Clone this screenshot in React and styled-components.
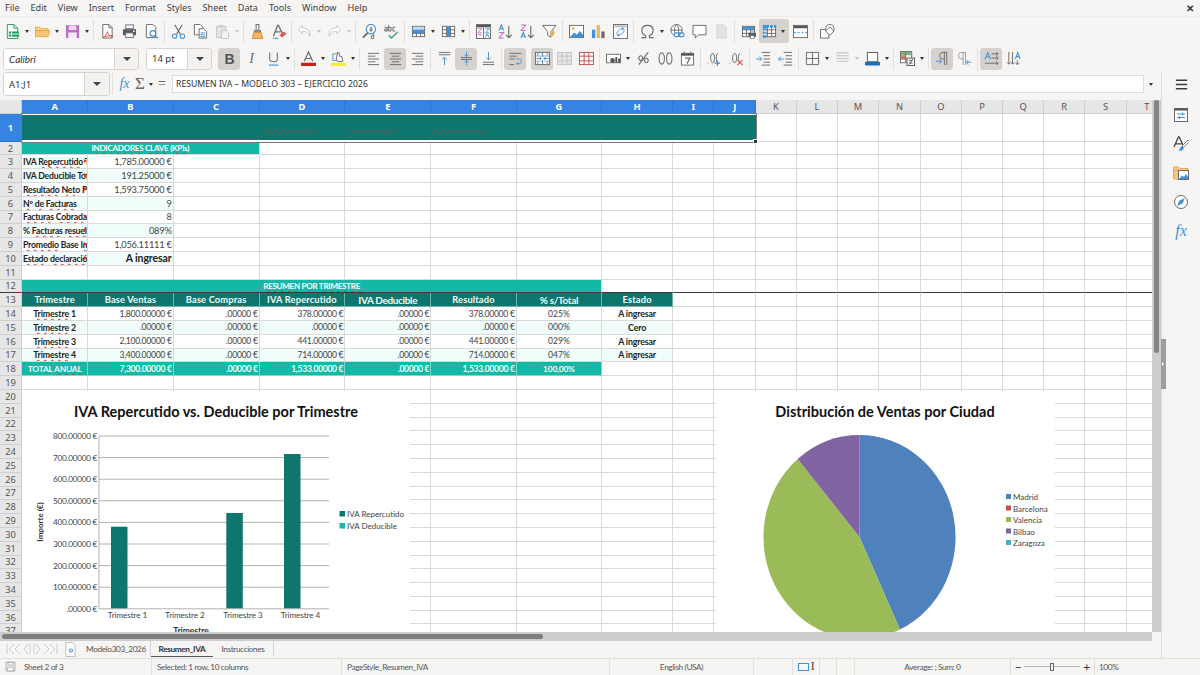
import React from 'react'
import styled, { createGlobalStyle } from 'styled-components'

const GlobalStyle = createGlobalStyle`
  html, body { margin: 0; padding: 0; background: #f6f5f4; }
  body { width: 1200px; height: 675px; overflow: hidden; font-family: "Noto Sans", sans-serif; }
`

const GR = '#6a6a6a'
const BL = '#3f92d8'
const LG = '#c4c4c4'

const Line = ({ d, c = GR, w = 1 }) => <path d={d} fill="none" stroke={c} strokeWidth={w} />

const Grid3 = ({ c = GR }) => (
  <>
    <rect x="1.5" y="2.5" width="13" height="11" fill="#fff" stroke={c} />
    <Line c={c} d="M1.5 6.2h13M1.5 10h13M5.8 2.5v11M10.2 2.5v11" />
  </>
)

const icons = {
  newDoc: (
    <>
      <path d="M2.5.5h7l4 4v11h-11z" fill="#fff" stroke="#1f9d61" />
      <path d="M9.5.5v4h4" fill="none" stroke="#1f9d61" />
      <rect x="4" y="8" width="11" height="5.5" fill="#1f9d61" />
      <Line c="#fff" d="M7 8v5.5M4 10.7h11" />
    </>
  ),
  open: (
    <>
      <path d="M.5 3.5h5l1.5 1.5h7v2H.5z" fill="#f7cf8f" stroke="#e9a944" />
      <path d="M.5 13.5V7h15l-1.5 6.500z" fill="#f8c677" stroke="#e9a944" />
    </>
  ),
  save: (
    <>
      <rect x="1" y="1" width="14" height="14" rx="1" fill="#c26bc9" />
      <rect x="4" y="1.500" width="8" height="5" fill="#f0d8f2" />
      <rect x="3.500" y="9" width="9" height="6" fill="#f7e9f8" />
    </>
  ),
  pdf: (
    <>
      <path d="M3 .5h6.500l3.500 3.500v11H3z" fill="#fff" stroke={GR} />
      <path d="M9.500.5V4H13" fill="none" stroke={GR} />
      <Line c="#d9534f" d="M8 8c-1 3-3 6-4.500 6.500S7 12 13 12.500c1.500.2 1 1.500-1 1-2-.5-3.500-3-4-5.500" />
    </>
  ),
  print: (
    <>
      <rect x="4" y="1" width="8" height="4" fill="#fff" stroke={GR} />
      <path d="M1 5.500h14v6.500H1z" fill="#555d66" />
      <rect x="4" y="9.500" width="8" height="5" fill="#fff" stroke={GR} />
      <rect x="11.800" y="7" width="1.800" height="1.500" fill="#fff" />
    </>
  ),
  preview: (
    <>
      <path d="M2.500.5h7l3 3v11h-10z" fill="#fff" stroke={GR} />
      <circle cx="9.500" cy="10" r="3" fill="#fff" stroke={BL} strokeWidth="1.300" />
      <Line c={BL} w={1.600} d="M11.500 12.200l3 3" />
    </>
  ),
  cut: (
    <>
      <Line c={GR} w={1.200} d="M4 .8l6 10M12 .8l-6 10" />
      <circle cx="3.800" cy="13" r="2.300" fill="#fff" stroke={BL} strokeWidth="1.200" />
      <circle cx="12.200" cy="13" r="2.300" fill="#fff" stroke={BL} strokeWidth="1.200" />
    </>
  ),
  copy: (
    <>
      <path d="M1.500.5h6l2.500 2.500v8.500H1.500z" fill="#fff" stroke={GR} />
      <path d="M6.500 5h5l3 3v7h-8z" fill="#fff" stroke={GR} />
      <Line c={BL} d="M8 9.500h5M8 11.500h5M8 13.500h5" />
    </>
  ),
  paste: (
    <>
      <path d="M1.500 2.500h10v12h-10z" fill="#e4e4e4" stroke={LG} />
      <rect x="4" y="1" width="5" height="3" fill="#cfcfcf" />
      <path d="M7 7h5l2.500 2.500v6H7z" fill="#f3f3f3" stroke={LG} />
    </>
  ),
  brush: (
    <>
      <rect x="6.500" y=".5" width="3" height="6" fill="#fff" stroke={GR} />
      <path d="M4 6.500h8v2.500H4z" fill="#888" />
      <path d="M4 9h8l1.500 6.500h-11z" fill="#f2b56a" stroke="#d98f34" />
    </>
  ),
  clearFmt: (
    <>
      <Line c={GR} w={1.300} d="M1.500 13L6 1.500h1L11 10M3.200 8.500h6" />
      <path d="M8 12l4.500-4 2.800 2.500-4.500 4z" fill="#e2524e" />
      <Line c={BL} d="M1 15.200h6" />
    </>
  ),
  undo: <path d="M5.500 1.500L1.500 6l4 4.500V8c4-.5 6.500 1 8 5 1-5.500-2.500-9-8-9z" fill="#fff" stroke={LG} />,
  redo: <path d="M10.500 1.500l4 4.500-4 4.500V8c-4-.5-6.500 1-8 5-1-5.500 2.500-9 8-9z" fill="#fff" stroke={LG} />,
  find: (
    <>
      <circle cx="9.500" cy="5.500" r="5" fill="#fff" stroke={BL} strokeWidth="1.200" />
      <Line c={GR} w={2} d="M6 9.500L1 14.500" />
      <Line c={GR} d="M8 4h2.500v3.500H8.500V5.700h2M12.500 10v5.500h-2.500v-3h2.500" />
    </>
  ),
  spell: (
    <>
      <Line c={GR} d="M.5 3.500h3v4H.8V5.500h2.700M5 1v6.500h2.500v-4H5M12 3.500H9.500v4H12" />
      <Line c="#3aa76d" w={1.500} d="M5 12l3 3 6.500-6.500" />
    </>
  ),
  rowIns: (
    <>
      <Grid3 />
      <rect x="2" y="6.500" width="12" height="3.300" fill={BL} />
      <rect x="2" y="3" width="12" height="3" fill="#bcdcf5" />
    </>
  ),
  colIns: (
    <>
      <Grid3 />
      <rect x="6.200" y="3" width="3.600" height="10" fill={BL} />
    </>
  ),
  sort: (
    <>
      <rect x=".5" y=".5" width="15" height="15" fill="#fff" stroke={GR} />
      <rect x="1" y="1" width="14" height="2.500" fill="#555" />
      <Line c="#c76fc9" d="M2 5h4L2 9.500h4M2 11.500h4" />
      <Line c={BL} d="M10 5h4l-4 4.500h4M10 14.500L12 10.500l2 4" />
      <Line c={GR} d="M8 3.500v12" />
    </>
  ),
  asc: (
    <>
      <Line c={BL} d="M1 7L3.500 1 6 7M1.900 5h3.200" w={1.100} />
      <Line c="#c76fc9" d="M1 9h5l-5 6h5" w={1.100} />
      <Line c={GR} w={1.200} d="M11.500 2v12.500M8.500 11.500l3 3 3-3" />
    </>
  ),
  desc: (
    <>
      <Line c="#c76fc9" d="M1 1h5L1 7h5" w={1.100} />
      <Line c={BL} d="M1 15L3.500 9 6 15M1.900 13h3.200" w={1.100} />
      <Line c={GR} w={1.200} d="M11.500 2v12.500M8.500 11.500l3 3 3-3" />
    </>
  ),
  filter: (
    <>
      <path d="M.5 1.500h14.500l-5.500 6.500v6l-3.500-2V8z" fill="#fff" stroke={GR} />
      <path d="M12 6l-3 5h2l-1 4 4-6h-2l1.500-3z" fill="#f2a93b" />
    </>
  ),
  image: (
    <>
      <rect x=".5" y="1.500" width="15" height="13" fill="#fff" stroke={GR} />
      <circle cx="4.500" cy="5" r="1.500" fill="#f2b84b" />
      <path d="M1 14l4.500-5 3 2.500 3-4 3.500 4V14z" fill={BL} />
    </>
  ),
  chart: (
    <>
      <rect x="1" y="6" width="3.500" height="9" fill={BL} />
      <rect x="6" y="1" width="3.500" height="14" fill="#f2b15c" />
      <rect x="11" y="8" width="3.500" height="7" fill="#6a6a6a" />
    </>
  ),
  pivot: (
    <>
      <rect x=".5" y=".5" width="15" height="15" fill="#fff" stroke={GR} />
      <rect x="1.500" y="1.500" width="13" height="2" fill="#bbb" />
      <Line c={BL} d="M4 11c0-3 3-6 7-6M9.500 3.800L11.500 5 9.500 6.500M12 6c0 3-3 6-7 6M6.500 13.200L4.500 12 6.500 10.500" />
    </>
  ),
  omega: <Line c={GR} w={1.200} d="M1.500 14.500H6v-2c-2.500-1-4-3-4-5.500C2 3.500 4.500 1.500 8 1.500s6 2 6 5.500c0 2.500-1.500 4.500-4 5.500v2h4.500" />,
  link: (
    <>
      <circle cx="7" cy="6.500" r="6" fill="#fff" stroke={GR} />
      <Line c={GR} d="M1 6.500h12M7 .5c-3 3-3 9 0 12M7 .5c3 3 3 9 0 12" />
      <rect x="4.500" y="9.500" width="6" height="4" rx="2" fill="#fff" stroke={BL} strokeWidth="1.200" />
      <rect x="9" y="9.500" width="6" height="4" rx="2" fill="none" stroke={BL} strokeWidth="1.200" />
    </>
  ),
  comment: <path d="M1 1.500h14v10H7l-3.500 3.500v-3.500H1z" fill="#fff" stroke={GR} />,
  header: <path d="M3 1h7l3 3v11H3z" fill="#e3e3e3" stroke="#d4d4d4" />,
  printArea: (
    <>
      <Grid3 />
      <rect x="2" y="3" width="12" height="3" fill={BL} />
      <rect x="8" y="9" width="8" height="5" rx="1" fill="#555d66" />
      <rect x="10" y="7.500" width="4" height="2" fill="#fff" stroke={GR} strokeWidth=".6" />
      <rect x="10" y="12.500" width="4" height="3" fill="#fff" stroke={GR} strokeWidth=".6" />
    </>
  ),
  freeze: (
    <>
      <Grid3 />
      <rect x="1" y="1" width="14" height="3" fill={BL} />
      <rect x="1" y="1" width="4" height="14" fill={BL} opacity=".75" />
      <Line c="#fff" d="M1 7.500h4M1 11h4M8 1v3M12 1v3" />
    </>
  ),
  split: (
    <>
      <rect x=".5" y="1.500" width="15" height="13" fill="#fff" stroke={GR} />
      <rect x="1" y="2" width="14" height="2.500" fill="#555" />
      <Line c={BL} d="M1 9h2M5 9h2M9 9h2M13 9h2" />
    </>
  ),
  shapes: (
    <>
      <rect x=".5" y="6" width="9" height="9" fill="#fff" stroke={GR} />
      <circle cx="10.500" cy="5" r="4.500" fill="#fff" stroke={GR} />
      <path d="M10.500 3l4.500 4.500-4.500 4.500L6 7.500z" fill="#fff" stroke={GR} />
    </>
  ),
  italic: <text x="8" y="13" textAnchor="middle" fontFamily="Liberation Serif" fontStyle="italic" fontSize="15" fill={GR}>I</text>,
  bold: <text x="8" y="13.500" textAnchor="middle" fontFamily="Liberation Sans" fontWeight="700" fontSize="15" fill="#555">B</text>,
  underline: (
    <>
      <Line c={GR} w={1.100} d="M4 1.500v7c0 4 8 4 8 0v-7" />
      <Line c={BL} w={1.200} d="M3 15h10" />
    </>
  ),
  fontColor: (
    <>
      <Line c={GR} w={1.300} d="M3.500 11L8 1l4.500 10M5 8h6" />
      <rect x="0" y="12.500" width="16" height="3.500" fill="#c9211e" />
    </>
  ),
  highlight: (
    <>
      <path d="M2 3h6v7H2z" fill="#fff" stroke={BL} />
      <path d="M7 1.500l1.500 0 .5 4 2.500.5 1 5-5 .5-2-3z" fill="#fff" stroke={GR} />
      <rect x="0" y="12.500" width="16" height="3.500" fill="#f7ee3a" />
    </>
  ),
  alignL: <Line d="M2 2.500h12M2 5.500h8M2 8.500h12M2 11.500h8M2 14.500h12" />,
  alignC: <Line d="M2 2.500h12M4 5.500h8M2 8.500h12M4 11.500h8M2 14.500h12" />,
  alignR: <Line d="M2 2.500h12M6 5.500h8M2 8.500h12M6 11.500h8M2 14.500h12" />,
  vTop: (
    <>
      <Line d="M2 1.500h12M2 4h12" />
      <Line c={BL} d="M8 15V7M5.500 9L8 6.500 10.500 9" />
    </>
  ),
  vMid: (
    <>
      <Line d="M2 7h12M2 9h12" />
      <Line c={BL} d="M8 1v4.500M5.800 3.800L8 6l2.200-2.200M8 15v-4.500M5.800 12.200L8 10l2.200 2.200" />
    </>
  ),
  vBot: (
    <>
      <Line d="M2 12h12M2 14.500h12" />
      <Line c={BL} d="M8 1v8M5.500 7L8 9.500 10.500 7" />
    </>
  ),
  wrap: (
    <>
      <Line d="M1.500 2.500h13M1.500 5.500h8M1.500 8.500h6M1.500 14.500h5" />
      <Line c={BL} d="M9 8.500h3c3 0 3 5 0 5H9M10.500 12l-1.500 1.500 1.500 1.500" />
    </>
  ),
  merge: (
    <>
      <rect x=".5" y="1.500" width="15" height="13" fill="#fff" stroke={GR} />
      <Line c="#888" d="M1 5.500h14M1 10.500h14" />
      <rect x="1" y="6" width="14" height="4.200" fill="#fff" />
      <Line c={BL} d="M1.500 8h5M5 6.500L6.500 8 5 9.500M14.500 8h-5M11 6.500L9.500 8 11 9.500M8 1.500V6M8 10v4.500M3 1.500V5M13 1.500V5M3 11v3M13 11v3" />
    </>
  ),
  mergeOff: (
    <>
      <rect x=".5" y="1.500" width="15" height="13" fill="#e6e6e6" stroke={LG} />
      <Line c={LG} d="M1 5.500h14M1 10.500h14M5.500 1.500v13M10.500 1.500v13" />
    </>
  ),
  unmerge: (
    <>
      <rect x=".5" y="1.500" width="15" height="13" fill="#fff" stroke="#c0504d" />
      <Line c="#c0504d" d="M1 5.500h14M1 10.500h14M5.500 1.500v13M10.500 1.500v13" />
    </>
  ),
  numFmt: (
    <>
      <rect x=".5" y="3.500" width="15" height="9" fill="#fff" stroke={GR} />
      <circle cx="7" cy="10" r="2.500" fill="#555" />
      <rect x="10" y="6.500" width="2" height="6" fill="#555" />
      <rect x="13" y="8" width="2" height="4.500" fill="#555" />
    </>
  ),
  percent: <Line c={GR} w={1.200} d="M13 1.500L3 14.500M5 5a2 2.500 0 1 1-.01 0M11 7.500a2 2.500 0 1 1-.01 0" />,
  decimal: <Line c={GR} w={1.100} d="M4 2c-3.800 0-3.800 12 0 12s3.800-12 0-12zM12 2c-3.800 0-3.800 12 0 12s3.800-12 0-12z" />,
  date: (
    <>
      <rect x="1.500" y="2.500" width="13" height="12.500" fill="#fff" stroke={GR} />
      <rect x="1.500" y="2.500" width="13" height="2.500" fill="#555" />
      <Line c={GR} d="M4.500.5v3M11.500.5v3" />
      <Line c={GR} w={1.300} d="M5.500 7.500h5L7.500 13.500" />
    </>
  ),
  addDec: (
    <>
      <Line c={GR} d="M1 12.500v.8M6 2.500c-2.800 0-2.800 10 0 10s2.800-10 0-10zM12 2.500c-2.800 0-2.800 10 0 10" />
      <Line c={BL} w={1.300} d="M11 16v-6M8 13h6" />
    </>
  ),
  delDec: (
    <>
      <Line c={GR} d="M1 12.500v.8M6 2.500c-2.800 0-2.800 10 0 10s2.800-10 0-10zM12 2.500c-2.800 0-2.800 10 0 10" />
      <Line c="#e2524e" w={1.300} d="M9 9.500l5.500 5.500M14.500 9.500L9 15" />
    </>
  ),
  indentIn: (
    <>
      <Line d="M6 1.500h9M8 5h7M8 8.500h7M8 12h7M6 15h9" />
      <Line c={BL} d="M0 8.500h6M3.500 6L6 8.500 3.500 11" />
    </>
  ),
  indentOut: (
    <>
      <Line d="M6 1.500h9M8 5h7M8 8.500h7M8 12h7M6 15h9" />
      <Line c={BL} d="M6.500 8.500H.5M3 6L.5 8.500 3 11" />
    </>
  ),
  borders: <Line c={GR} d="M1.500 1.500h13v13h-13zM8 1.500v13M1.500 8h13" />,
  lineStyle: <Line c={LG} w={1.100} d="M1.500 2h13M1.500 5h13M1.500 8h13M1.500 11h13" />,
  borderColor: (
    <>
      <rect x="2.500" y="1.500" width="11" height="10" fill="#fff" stroke="#555" />
      <rect x="0" y="11.500" width="16" height="4" rx="1" fill="#1c6fb5" />
    </>
  ),
  condFmt: (
    <>
      <rect x=".5" y=".5" width="12" height="12" fill="#fff" stroke={GR} />
      <rect x="1" y="1" width="11" height="3.500" fill="#7bb77b" />
      <rect x="1" y="4.500" width="5" height="4" fill="#e2746f" />
      <Line c={GR} d="M1 8.500h11M6 1v11" />
      <rect x="7.500" y="7.500" width="8" height="8" fill="#fff" stroke="#555" />
      <Line c="#555" d="M9.500 10h4M9.500 12.800h4M10 14.500l3.500-6" />
    </>
  ),
  paraL: (
    <>
      <Line d="M13 1.500H8.500a3.500 3.500 0 0 0 0 7h1.500M10 1.500V15M12.500 1.500V15" />
      <Line c={BL} d="M1 11h6M4.500 8.500L7 11l-2.500 2.500" />
    </>
  ),
  paraR: (
    <>
      <Line c="#999" d="M9 1.500H5a3.500 3.500 0 0 0 0 7h1.500M6.500 1.500V15M9 1.500V15" />
      <Line c={BL} d="M15 12h-5M12 9.500L10 12l2 2.500" />
    </>
  ),
  textH: (
    <>
      <Line c={BL} w={1.100} d="M1 9L4 1.500 7 9M2 6.500h4" />
      <Line d="M8 3h7M13 1l2 2-2 2M8 7.500h7M13 5.500l2 2-2 2M1 13h14M13 11l2 2-2 2" />
    </>
  ),
  textV: (
    <>
      <Line c={BL} w={1.100} d="M10 8.500L12.500 1.500 15 8.500M10.800 6h3.500" />
      <Line d="M3 1v13M1 12l2 2 2-2M7 1v13M5 12l2 2 2-2M12 10v4.500M10 12.500l2 2 2-2" />
    </>
  ),
  hamburger: <Line c="#3c3c3c" w={1.500} d="M2 3.500h12M2 8h12M2 12.500h12" />,
  props: (
    <>
      <rect x="1.500" y="1.500" width="13" height="13" fill="#fff" stroke={GR} />
      <rect x="1.500" y="1.500" width="13" height="2" fill="#555" />
      <Line c={BL} d="M4 7h8M4 10.500h8M9.500 5.500v3M6.500 9v3" />
    </>
  ),
  styles: (
    <>
      <Line c="#444" w={1.300} d="M1 11L5.500 1h.7L10 9M2.500 7.800h6" />
      <path d="M15 4l-6 6 1.500 1.500 6-6z" fill="#fff" stroke={GR} strokeWidth=".8" />
      <path d="M9.500 10c-2 .5-2.500 2-3.500 5 2.500 0 4.500-1 5-3.500z" fill={BL} />
    </>
  ),
  gallery: (
    <>
      <path d="M.5 2h5l1.500 1.500h8v4H.5z" fill="#f7cf8f" stroke="#e9a944" />
      <path d="M.5 5v9h6V5z" fill="#f8c677" stroke="#e9a944" />
      <rect x="5.500" y="5.500" width="10" height="9" fill="#fff" stroke={GR} />
      <path d="M6 14l3-3.500 2 1.500 2-3 2 3v2z" fill={BL} />
    </>
  ),
  navigator: (
    <>
      <circle cx="8" cy="8" r="6.500" fill="#fff" stroke={GR} />
      <path d="M12 4L9.500 9.500 4 12l2.500-5.500z" fill={BL} />
    </>
  ),
  statusSave: (
    <>
      <rect x="1.500" y="1.500" width="13" height="13" fill="#f1f1f1" stroke="#9a9a9a" />
      <rect x="4.500" y="2" width="7" height="4" fill="#fff" stroke="#9a9a9a" />
      <rect x="4" y="9" width="8" height="5.500" fill="#fff" stroke="#9a9a9a" />
    </>
  ),
  newSheet: (
    <>
      <path d="M3 .5h7l3 3v12H3z" fill="#fff" stroke="#bbb" />
      <circle cx="8.500" cy="9" r="2.200" fill={BL} />
      <Line c="#fff" d="M7.300 9h2.400M8.500 7.800v2.400" />
    </>
  )
}

const Bar = styled.div`
  display: flex;
  align-items: center;
  flex: none;
  background: #f6f5f4;
`

const MenuBar = styled(Bar)`
  height: 17px;
  padding-left: 5px;
  position: relative;
  gap: 11px;
  font-size: 9.1px;
  color: #3d3d3d;
  border-bottom: 1px solid #eeecea;
  box-sizing: border-box;
`

const MenuItem = styled.span`
  line-height: 16px;
`

const CloseX = styled.span`
  margin-left: auto;
  margin-right: 6px;
  font-size: 10px;
  font-weight: 700;
  color: #333;
`

const ToolRow = styled(Bar)`
  height: ${(p) => p.$h}px;
  padding-left: ${(p) => p.$pad}px;
`

const Btn = styled.div`
  flex: none;
  width: 22px;
  height: 22px;
  border-radius: 3px;
  display: flex;
  align-items: center;
  justify-content: center;
  background: ${(p) => (p.$on ? '#d5d2ce' : 'transparent')};
  svg { display: block; }
`

const Ico = ({ n, s = 15 }) => (
  <svg width={s} height={s} viewBox="0 0 16 16">
    {icons[n]}
  </svg>
)

const CaretBox = styled.div`
  flex: none;
  width: 8px;
  margin-left: ${(p) => p.$ml || 0}px;
  display: flex;
  justify-content: center;
  &::before {
    content: '';
    border-left: 2.5px solid transparent;
    border-right: 2.5px solid transparent;
    border-top: 3px solid ${(p) => (p.$off ? '#c4c4c4' : '#333')};
  }
`

const Sep = styled.div`
  flex: none;
  width: ${(p) => p.$w || 5}px;
  height: 22px;
  display: flex;
  justify-content: center;
  &::before {
    content: '';
    width: 1px;
    background: #e2e0dd;
  }
`

const Combo = styled.div`
  flex: none;
  display: flex;
  width: ${(p) => p.$w}px;
  height: ${(p) => p.$h || 22}px;
  margin-right: ${(p) => p.$mr || 0}px;
  border: 1px solid #d7d4d0;
  border-radius: 3px;
  box-sizing: border-box;
  overflow: hidden;
  font-size: 9.5px;
  color: #333;
`

const ComboText = styled.div`
  flex: 1;
  background: #fff;
  display: flex;
  align-items: center;
  padding-left: 5px;
  font-style: ${(p) => (p.$italic ? 'italic' : 'normal')};
  font-family: ${(p) => (p.$italic ? '"Lato", sans-serif' : 'inherit')};
  font-size: ${(p) => (p.$italic ? 10 : 9.5)}px;
`

const ComboArrow = styled.div`
  flex: none;
  width: ${(p) => p.$w}px;
  border-left: 1px solid #d7d4d0;
  background: #f3f2f0;
  display: flex;
  align-items: center;
  justify-content: center;
  &::before {
    content: '';
    border-left: 4px solid transparent;
    border-right: 4px solid transparent;
    border-top: 4px solid #444;
  }
`

const top1 = 'newDoc,^,open,^,save,^,|,pdf,print,preview,|,cut,copy,paste,~,|,brush,clearFmt,!,undo,~,redo,~,|,find,spell,|,rowIns,^,colIns,^,|,sort,asc,desc,filter,|,image,chart,pivot,|,omega,^,link,comment,header,|,printArea'.split(',')
const top2a = 'bold*,italic,underline,^,|,fontColor,^,highlight,^,|,alignL,alignC*,alignR,|,vTop,vMid*,vBot,|,wrap*'.split(',')
const top2b = 'merge*,mergeOff,unmerge,|,numFmt,^,percent,decimal,date,|,addDec,delDec,|,indentIn,indentOut,|,borders,^,lineStyle,~,borderColor,^,|,condFmt,^,|,paraL*,paraR,|,textH*,textV'.split(',')

const renderTools = (list) =>
  list.map((item, i) => {
    if (item === '^') return <CaretBox key={i} />
    if (item === '~') return <CaretBox key={i} $off />
    if (item === '|') return <Sep key={i} />
    if (item === '!') return <Sep key={i} $w={3} />
    const on = item.endsWith('*')
    return (
      <Btn key={i} $on={on}>
        <Ico n={on ? item.slice(0, -1) : item} />
      </Btn>
    )
  })

const FreezeGroup = styled.div`
  flex: none;
  width: 30px;
  height: 24px;
  border-radius: 3px;
  background: #d5d2ce;
  display: flex;
  align-items: center;
  padding-left: 3px;
  box-sizing: border-box;
  gap: 2px;
`

const MergeGap = styled.div`
  flex: none;
  width: 5px;
`

const Workspace = styled.div`
  flex: 1;
  display: flex;
  min-height: 0;
`

const LeftPane = styled.div`
  flex: none;
  width: 1161px;
  display: flex;
  flex-direction: column;
`

const FormulaBar = styled(Bar)`
  height: 28px;
  padding: 0 3px 4px;
  box-sizing: border-box;
`

const FxSep = styled(Sep)`
  margin-right: 1px;
`

const FxBtn = styled.div`
  flex: none;
  width: ${(p) => p.$w}px;
  display: flex;
  justify-content: center;
  font-family: "Liberation Serif", serif;
  font-style: ${(p) => (p.$italic ? 'italic' : 'normal')};
  font-size: ${(p) => p.$size}px;
  color: ${(p) => p.$color};
`

const FormulaInput = styled.div`
  flex: none;
  width: 972px;
  height: 18px;
  margin-left: 3px;
  border: 1px solid #dedcd9;
  background: #fff;
  box-sizing: border-box;
  display: flex;
  align-items: center;
  padding-left: 3px;
  font-size: 8.7px;
  color: #333;
`

const SheetArea = styled.div`
  flex: none;
  height: 532px;
  display: flex;
`

const SheetView = styled.div`
  position: relative;
  flex: none;
  width: 1152px;
  height: 532px;
  overflow: hidden;
  background: #fff;
`

const columnWidths = [22, 66.3, 85.3, 86, 85.7, 86, 85.3, 85.7, 70.7, 41.5, 41.5, 41, 41, 41.2, 41.7, 41.2, 41, 41, 41.3, 41.5, 41]

const SheetGrid = styled.div`
  display: grid;
  grid-template-columns: ${columnWidths.map((w) => `${w}px`).join(' ')};
  grid-template-rows: 13.8px 27.8px repeat(36, 13.8px);
  font-family: "Lato", sans-serif;
`

const HeadCell = styled.div`
  box-sizing: border-box;
  display: flex;
  align-items: center;
  justify-content: center;
  overflow: hidden;
  font-family: "Noto Sans", sans-serif;
  font-size: 9.3px;
  font-weight: ${(p) => (p.$on ? 700 : 400)};
  background: ${(p) => (p.$on ? '#3584e4' : '#e6e6e6')};
  color: ${(p) => (p.$on ? '#fff' : '#555')};
  border-right: 1px solid ${(p) => (p.$on ? '#2f76cc' : '#cfcfcf')};
  border-bottom: 1px solid ${(p) => (p.$freeze ? '#3a3a3a' : p.$on ? '#2f76cc' : '#cfcfcf')};
`

const kinds = {
  title: `background:#0f766e;color:#0f766e;font-weight:700;font-size:11px;justify-content:center;padding-bottom:8px;`,
  band: `background:#14b8a6;color:#fff;font-weight:700;font-size:8px;letter-spacing:-.25px;justify-content:center;`,
  head: `background:#0f766e;color:#f0fdfa;font-weight:700;font-size:9.3px;justify-content:center;letter-spacing:.15px;border-color:#6fb3ad;`,
  headPlain: `background:#0f766e;color:#f0fdfa;font-weight:700;font-size:10px;letter-spacing:-.35px;justify-content:center;border-color:#6fb3ad;`,
  label: `color:#222;font-weight:700;font-size:8.7px;letter-spacing:-.2px;padding-left:1px;`,
  value: `color:#444;font-size:9.3px;letter-spacing:-.25px;justify-content:flex-end;padding-right:1px;`,
  big: `color:#222;font-weight:700;font-size:10.5px;letter-spacing:-.1px;justify-content:flex-end;padding-right:1px;`,
  center: `color:#222;font-weight:700;font-size:8.8px;letter-spacing:-.15px;justify-content:center;`,
  amount: `color:#444;font-size:8.6px;letter-spacing:-.3px;justify-content:flex-end;padding-right:1px;`,
  pct: `color:#444;font-size:8.6px;justify-content:center;`,
  total: `background:#14b8a6;color:#f0fdfa;font-weight:700;font-size:8.6px;letter-spacing:-.3px;justify-content:flex-end;padding-right:1px;border-color:#7fd6cb;`,
  totalC: `background:#14b8a6;color:#f0fdfa;font-weight:700;font-size:8.4px;letter-spacing:-.2px;justify-content:center;border-color:#7fd6cb;`
}

const Cell = styled.div`
  box-sizing: border-box;
  min-width: 0;
  display: flex;
  align-items: center;
  white-space: nowrap;
  overflow: hidden;
  position: relative;
  border-right: 1px solid #d9d9d9;
  border-bottom: 1px solid #d9d9d9;
  grid-column: span ${(p) => p.$span || 1};
  background: ${(p) => (p.$tint ? '#f0fdfa' : '#fff')};
  ${(p) => kinds[p.$kind] || ''}
  ${(p) => (p.$freeze ? 'border-bottom-color:#3a3a3a;' : '')}
`

const SelectedTitle = styled(Cell)`
  overflow: visible;
  z-index: 2;
  border: none;
  box-shadow: inset 0 1px 0 #fff, inset 0 -2px 0 #fff;
  outline: 1px solid #777;
  outline-offset: 0;
  &::after {
    content: '';
    position: absolute;
    right: -2px;
    bottom: -2px;
    width: 3px;
    height: 3px;
    background: #333;
    border: 1px solid #fff;
  }
`

const Spell = styled.span`
  text-decoration: underline wavy ${(p) => p.$c || '#d9342b'} ${(p) => p.$t || 1}px;
  text-decoration-skip-ink: none;
  text-underline-offset: 1px;
`

const Clip = styled.span`
  position: absolute;
  right: 0;
  top: 50%;
  margin-top: -2.5px;
  border-top: 2.5px solid transparent;
  border-bottom: 2.5px solid transparent;
  border-left: 3px solid #d9342b;
`

const TitleSpell = (p) => <Spell $c="#7d4f48" $t={1.2} {...p} />

const kpiRow = (label, value, tint, kind = 'value') => ({
  A: { kind: 'label', tint, text: label, clip: true },
  B: { kind, tint, text: value }
})

const quarter = (n, ventas, iva, res, pct, estado, tint) => ({
  A: { kind: 'center', tint, text: <><Spell>Trimestre</Spell> {n}</> },
  B: { kind: 'amount', tint, text: ventas },
  C: { kind: 'amount', tint, text: '.00000 €' },
  D: { kind: 'amount', tint, text: iva },
  E: { kind: 'amount', tint, text: '.00000 €' },
  F: { kind: 'amount', tint, text: res },
  G: { kind: 'pct', tint, text: pct },
  H: { kind: 'center', tint, text: estado }
})

const sheetData = {
  2: { A: { kind: 'band', span: 3, text: <><Spell>INDICADORES</Spell> <Spell>CLAVE</Spell> (<Spell>KPIs</Spell>)</> } },
  3: kpiRow(<>IVA <Spell>Repercutido</Spell> Total</>, '1,785.00000 €'),
  4: kpiRow('IVA Deducible Total', '191.25000 €', true),
  5: kpiRow(<><Spell>Resultado</Spell> <Spell>Neto</Spell> Periodo</>, '1,593.75000 €'),
  6: { A: { kind: 'label', tint: true, text: <><Spell>Nº</Spell> <Spell>de</Spell> <Spell>Facturas</Spell></> }, B: { kind: 'value', tint: true, text: '9' } },
  7: kpiRow(<><Spell>Facturas</Spell> <Spell>Cobradas</Spell></>, '8'),
  8: kpiRow(<>% <Spell>Facturas</Spell> <Spell>resueltas</Spell></>, '089%', true),
  9: kpiRow(<><Spell>Promedio</Spell> Base <Spell>Imponible</Spell></>, '1,056.11111 €'),
  10: kpiRow(<><Spell>Estado</Spell> <Spell>declaración</Spell></>, 'A ingresar', true, 'big'),
  12: { A: { kind: 'band', span: 7, text: <><Spell>RESUMEN</Spell> POR <Spell>TRIMESTRE</Spell></> } },
  13: {
    A: { kind: 'head', text: <Spell>Trimestre</Spell> },
    B: { kind: 'head', text: <>Base <Spell>Ventas</Spell></> },
    C: { kind: 'head', text: <>Base <Spell>Compras</Spell></> },
    D: { kind: 'head', text: <>IVA <Spell>Repercutido</Spell></> },
    E: { kind: 'headPlain', text: 'IVA Deducible' },
    F: { kind: 'head', text: <Spell>Resultado</Spell> },
    G: { kind: 'headPlain', text: '% s/Total' },
    H: { kind: 'head', text: <Spell>Estado</Spell> }
  },
  14: quarter(1, '1,800.00000 €', '378.00000 €', '378.00000 €', '025%', 'A ingresar'),
  15: quarter(2, '.00000 €', '.00000 €', '.00000 €', '000%', 'Cero', true),
  16: quarter(3, '2,100.00000 €', '441.00000 €', '441.00000 €', '029%', 'A ingresar'),
  17: quarter(4, '3,400.00000 €', '714.00000 €', '714.00000 €', '047%', 'A ingresar', true),
  18: {
    A: { kind: 'totalC', text: <>TOTAL <Spell>ANUAL</Spell></> },
    B: { kind: 'total', text: '7,300.00000 €' },
    C: { kind: 'total', text: '.00000 €' },
    D: { kind: 'total', text: '1,533.00000 €' },
    E: { kind: 'total', text: '.00000 €' },
    F: { kind: 'total', text: '1,533.00000 €' },
    G: { kind: 'totalC', text: '100,00%' }
  }
}

const COLS = 'ABCDEFGHIJKLMNOPQRST'.split('')

const renderRow = (row) => {
  const data = sheetData[row] || {}
  const freeze = row === 12
  const out = []
  for (let i = 0; i < COLS.length; i++) {
    const col = COLS[i]
    const c = data[col]
    if (c) {
      out.push(
        <Cell key={col} $kind={c.kind} $tint={c.tint} $span={c.span} $freeze={freeze}>
          <span>{c.text}</span>
          {c.clip && <Clip />}
        </Cell>
      )
      if (c.span) i += c.span - 1
    } else {
      out.push(<Cell key={col} $freeze={freeze} />)
    }
  }
  return out
}

const ChartFrame = styled.div`
  position: absolute;
  left: ${(p) => p.$left}px;
  top: 291px;
  width: ${(p) => p.$width}px;
  height: 241px;
  background: #fff;
  overflow: hidden;
  z-index: 1;
  svg { display: block; }
`

const ticks = ['800.00000 €', '700.00000 €', '600.00000 €', '500.00000 €', '400.00000 €', '300.00000 €', '200.00000 €', '100.00000 €', '.00000 €']
const bars = [
  { x: 89, top: 135.700, label: 'Trimestre 1', cx: 105.500 },
  { x: null, label: 'Trimestre 2', cx: 163 },
  { x: 204.300, top: 122, label: 'Trimestre 3', cx: 221 },
  { x: 262, top: 63, label: 'Trimestre 4', cx: 278.500 }
]

const VatChart = () => (
  <svg width="388" height="241" viewBox="0 0 388 241" fontFamily="Lato, sans-serif">
    <text x="194" y="25.500" textAnchor="middle" fontSize="14.500" fontWeight="700" fill="#111">IVA Repercutido vs. Deducible por Trimestre</text>
    {ticks.map((t, i) => {
      const y = 45 + i * 21.6
      return (
        <g key={t}>
          <line x1="77" x2="307" y1={y} y2={y} stroke="#b3b3b3" strokeWidth="1" />
          <text x="75" y={y + 3} textAnchor="end" fontSize="8.200" letterSpacing="-.25" fill="#444">{t}</text>
        </g>
      )
    })}
    <line x1="77" x2="77" y1="45" y2="217.800" stroke="#b3b3b3" />
    {bars.map((b) => (
      <g key={b.label}>
        {b.x !== null && <rect x={b.x} y={b.top} width="16.500" height={217.300 - b.top} fill="#0f766e" />}
        <text x={b.cx} y="227" textAnchor="middle" fontSize="8.200" letterSpacing="-.1" fill="#444">{b.label}</text>
      </g>
    ))}
    <text transform="translate(21 131) rotate(-90)" textAnchor="middle" fontSize="8" fontWeight="700" fill="#333">Importe (€)</text>
    <text x="169" y="243" textAnchor="middle" fontSize="8.500" fontWeight="700" fill="#333">Trimestre</text>
    <rect x="317.500" y="120" width="5.500" height="5.500" fill="#0f766e" />
    <text x="325" y="126" fontSize="8" fill="#444">IVA Repercutido</text>
    <rect x="317.500" y="132" width="5.500" height="5.500" fill="#14b8a6" />
    <text x="325" y="138" fontSize="8" fill="#444">IVA Deducible</text>
  </svg>
)

const legend = [
  ['Madrid', '#4f81bd'],
  ['Barcelona', '#c0504d'],
  ['Valencia', '#9bbb59'],
  ['Bilbao', '#8064a2'],
  ['Zaragoza', '#4bacc6']
]

const PieChart = () => (
  <svg width="339" height="241" viewBox="0 0 339 241" fontFamily="Lato, sans-serif">
    <text x="169" y="25.500" textAnchor="middle" fontSize="14.500" fontWeight="700" fill="#111">Distribución de Ventas por Ciudad</text>
    <path d="M143.500 146V44A96 102 0 0 1 184 238.500z" fill="#4f81bd" />
    <path d="M143.500 146L184 238.500A96 102 0 0 1 81.700 67.950z" fill="#9bbb59" />
    <path d="M143.500 146L81.700 67.950A96 102 0 0 1 143.500 44z" fill="#8064a2" />
    {legend.map(([name, color], i) => (
      <g key={name}>
        <rect x="290" y={103 + i * 11.500} width="5" height="5" fill={color} />
        <text x="297" y={109 + i * 11.500} fontSize="8" fill="#444">{name}</text>
      </g>
    ))}
  </svg>
)

const VScroll = styled.div`
  flex: none;
  width: 9px;
  background: #cdcdcd;
  padding: 0 2px;
  box-sizing: border-box;
  &::before {
    content: '';
    display: block;
    width: 5px;
    height: 253px;
    background: #858585;
    border-radius: 3px;
  }
`

const HScroll = styled.div`
  flex: none;
  height: 9px;
  background: #cdcdcd;
  display: flex;
  align-items: center;
  padding-left: 2px;
  margin-right: 9px;
`

const HThumb = styled.div`
  width: 541px;
  height: 5.500px;
  border-radius: 3px;
  background: #7d7d7d;
`

const TabBar = styled(Bar)`
  flex: 1;
  font-family: "Lato", sans-serif;
  font-size: 8.3px;
  letter-spacing: -.4px;
  color: #555;
`

const TabNav = styled.div`
  flex: none;
  width: 52px;
  margin-left: 6px;
  display: flex;
  svg { display: block; }
`

const NewTab = styled.div`
  flex: none;
  width: 24px;
  display: flex;
  justify-content: center;
`

const Tab = styled.div`
  flex: none;
  width: ${(p) => p.$w}px;
  height: 16px;
  box-sizing: border-box;
  display: flex;
  align-items: center;
  justify-content: center;
  font-weight: ${(p) => (p.$on ? 700 : 400)};
  color: ${(p) => (p.$on ? '#333' : '#555')};
  border-bottom: 1.500px solid ${(p) => (p.$on ? '#555' : 'transparent')};
  border-right: ${(p) => (p.$line ? '1px solid #d5d3d0' : 'none')};
`

const Sidebar = styled.div`
  position: relative;
  flex: 1;
  border-left: 1px solid #dedcd9;
  display: flex;
  flex-direction: column;
  align-items: center;
  padding-top: 4.500px;
  gap: 12.500px;
`

const SideIcon = styled.div`
  width: 16px;
  height: 16.500px;
  display: flex;
  align-items: center;
  justify-content: center;
  font-family: "Liberation Serif", serif;
  font-style: italic;
  font-size: 16px;
  color: #3f92d8;
  svg { display: block; }
`

const SideMenu = styled(SideIcon)`
  margin-bottom: 1.500px;
`

const SideHandle = styled.div`
  position: absolute;
  left: -1px;
  top: 267px;
  width: 4.500px;
  height: 50px;
  background: #9d9d9d;
  &::after {
    content: '';
    position: absolute;
    left: 1px;
    top: 23px;
    border-top: 2px solid transparent;
    border-bottom: 2px solid transparent;
    border-left: 2.500px solid #fff;
  }
`

const StatusBar = styled(Bar)`
  height: 17.500px;
  font-family: "Lato", sans-serif;
  font-size: 8.3px;
  letter-spacing: -.4px;
  color: #555;
  border-top: 1px solid #e2e0dd;
  box-sizing: border-box;
`

const StatusCell = styled.div`
  flex: none;
  width: ${(p) => p.$w}px;
  height: 100%;
  box-sizing: border-box;
  display: flex;
  align-items: center;
  justify-content: ${(p) => (p.$center ? 'center' : 'flex-start')};
  padding-left: ${(p) => p.$pl || 0}px;
  gap: ${(p) => p.$gap || 0}px;
  border-right: ${(p) => (p.$noLine ? 'none' : '1px solid #e2e0dd')};
`

const SelMode = styled.div`
  width: 9px;
  height: 6px;
  border: 1px solid #3f92d8;
  background: #f0f7fd;
`

const Cursor = styled.span`
  font-family: "Liberation Serif", serif;
  font-size: 12px;
  color: #444;
`

const Slider = styled.div`
  position: relative;
  width: 56px;
  height: 1px;
  background: #b5b5b5;
  margin: 0 3px;
  &::after {
    content: '';
    position: absolute;
    left: 26px;
    top: -3px;
    width: 2px;
    height: 6px;
    border: 1px solid #666;
    background: #f6f5f4;
  }
`

const ZoomSign = styled.span`
  font-size: 12px;
  color: #333;
  line-height: 1;
`

const Page = styled.div`
  width: 1200px;
  height: 675px;
  display: flex;
  flex-direction: column;
  overflow: hidden;
`

const menus = ['File', 'Edit', 'View', 'Insert', 'Format', 'Styles', 'Sheet', 'Data', 'Tools', 'Window', 'Help']
const sideIcons = ['props', 'styles', 'gallery', 'navigator']

export default function App() {
  return (
    <Page>
      <GlobalStyle />
      <MenuBar>
        {menus.map((m) => (
          <MenuItem key={m}>{m}</MenuItem>
        ))}
        <CloseX>✕</CloseX>
      </MenuBar>
      <ToolRow $h={28} $pad={1}>
        {renderTools(top1)}
        <FreezeGroup>
          <Ico n="freeze" />
          <CaretBox />
        </FreezeGroup>
        <Btn>
          <Ico n="split" />
        </Btn>
        <Sep />
        <Btn>
          <Ico n="shapes" />
        </Btn>
      </ToolRow>
      <ToolRow $h={27} $pad={3}>
        <Combo $w={136} $mr={7}>
          <ComboText $italic>Calibri</ComboText>
          <ComboArrow $w={23} />
        </Combo>
        <Combo $w={66} $mr={6}>
          <ComboText>14 pt</ComboText>
          <ComboArrow $w={23} />
        </Combo>
        {renderTools(top2a)}
        <MergeGap />
        {renderTools(top2b)}
      </ToolRow>
      <Workspace>
        <LeftPane>
          <FormulaBar>
            <Combo $w={107} $h={24}>
              <ComboText>A1:J1</ComboText>
              <ComboArrow $w={24} />
            </Combo>
            <FxSep />
            <FxBtn $w={17} $italic $size={14} $color="#3f92d8">fx</FxBtn>
            <FxBtn $w={14} $size={17} $color="#666">Σ</FxBtn>
            <CaretBox />
            <FxBtn $w={14} $size={14} $color="#444">=</FxBtn>
            <FormulaInput>RESUMEN IVA – MODELO 303 – EJERCICIO 2026</FormulaInput>
            <CaretBox $ml={3} />
          </FormulaBar>
          <SheetArea>
            <SheetView>
              <SheetGrid>
                <HeadCell />
                {COLS.map((c, i) => (
                  <HeadCell key={c} $on={i < 10}>{c}</HeadCell>
                ))}
                <HeadCell $on>1</HeadCell>
                <SelectedTitle $kind="title" $span={10}>
                  <span>
                    <TitleSpell>RESUMEN</TitleSpell> IVA – <TitleSpell>MODELO</TitleSpell> 303 – <TitleSpell>EJERCICIO</TitleSpell> 2026
                  </span>
                </SelectedTitle>
                {COLS.slice(10).map((c) => (
                  <Cell key={c} />
                ))}
                {Array.from({ length: 36 }, (_, i) => i + 2).map((row) => (
                  <React.Fragment key={row}>
                    <HeadCell $freeze={row === 12}>{row}</HeadCell>
                    {renderRow(row)}
                  </React.Fragment>
                ))}
              </SheetGrid>
              <ChartFrame $left={22} $width={388}>
                <VatChart />
              </ChartFrame>
              <ChartFrame $left={716} $width={339}>
                <PieChart />
              </ChartFrame>
            </SheetView>
            <VScroll />
          </SheetArea>
          <HScroll>
            <HThumb />
          </HScroll>
          <TabBar>
            <TabNav>
              <svg width="52" height="14" viewBox="0 0 52 14">
                <path d="M1 2v10M8 2L3 7l5 5M14 2L9 7l5 5M22 2l-4 5 4 5M24 2v10M28 2v10M30 2l4 5-4 5M38 2l5 5-5 5M44 2l5 5-5 5M51 2v10" fill="none" stroke="#cfcdca" strokeWidth="1" />
              </svg>
            </TabNav>
            <NewTab>
              <Ico n="newSheet" s={15} />
            </NewTab>
            <Tab $w={69} $line>Modelo303_2026</Tab>
            <Tab $w={62} $on>Resumen_IVA</Tab>
            <Tab $w={61} $line>Instrucciones</Tab>
          </TabBar>
        </LeftPane>
        <Sidebar>
          <SideHandle />
          <SideMenu>
            <Ico n="hamburger" s={15} />
          </SideMenu>
          {sideIcons.map((n) => (
            <SideIcon key={n}>
              <Ico n={n} s={16} />
            </SideIcon>
          ))}
          <SideIcon>fx</SideIcon>
        </Sidebar>
      </Workspace>
      <StatusBar>
        <StatusCell $w={152} $pl={5} $gap={8}>
          <Ico n="statusSave" s={11} />
          Sheet 2 of 3
        </StatusCell>
        <StatusCell $w={190} $pl={5}>Selected: 1 row, 10 columns</StatusCell>
        <StatusCell $w={268} $pl={5}>PageStyle_Resumen_IVA</StatusCell>
        <StatusCell $w={144} $center>English (USA)</StatusCell>
        <StatusCell $w={39} />
        <StatusCell $w={27} $center $gap={2}>
          <SelMode />
          <Cursor>I</Cursor>
        </StatusCell>
        <StatusCell $w={17} />
        <StatusCell $w={18} />
        <StatusCell $w={155.700} $center>Average: ; Sum: 0</StatusCell>
        <StatusCell $w={84} $center>
          <ZoomSign>−</ZoomSign>
          <Slider />
          <ZoomSign>+</ZoomSign>
        </StatusCell>
        <StatusCell $w={28} $center $noLine>100%</StatusCell>
      </StatusBar>
    </Page>
  )
}
